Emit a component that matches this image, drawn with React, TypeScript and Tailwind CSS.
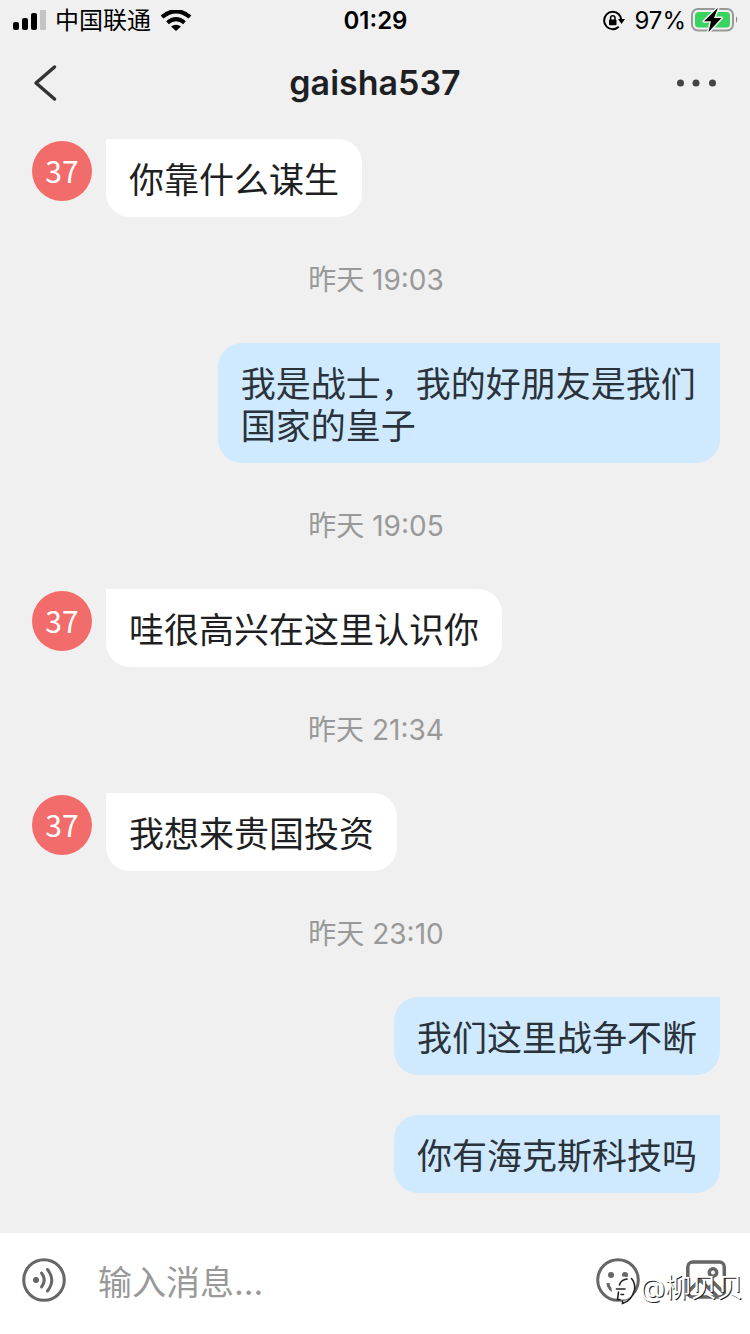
import React from "react";

type Item =
  | { kind: "time"; text: string }
  | { kind: "in" | "out"; text: string };

const items: Item[] = [
  { kind: "in", text: "你靠什么谋生" },
  { kind: "time", text: "昨天 19:03" },
  { kind: "out", text: "我是战士，我的好朋友是我们国家的皇子" },
  { kind: "time", text: "昨天 19:05" },
  { kind: "in", text: "哇很高兴在这里认识你" },
  { kind: "time", text: "昨天 21:34" },
  { kind: "in", text: "我想来贵国投资" },
  { kind: "time", text: "昨天 23:10" },
  { kind: "out", text: "我们这里战争不断" },
  { kind: "out", text: "你有海克斯科技吗" },
];

function StatusBar() {
  return (
    <div className="grid h-[42px] grid-cols-[1fr_auto_1fr] items-center pr-3 pl-[13px] text-2xl text-black">
      <div className="flex items-center gap-[9px]">
        <svg width="33" height="22" viewBox="0 0 33 22" aria-hidden="true">
          <rect x="0" y="12" width="6" height="8" rx="2" />
          <rect x="9" y="8" width="6" height="12" rx="2" />
          <rect x="18" y="3" width="6" height="17" rx="2" />
          <rect x="27" y="-1" width="6" height="21" rx="1.5" fill="#c4c4c4" />
        </svg>
        <span className="leading-10">中国联通</span>
        <svg width="32" height="22" viewBox="0 0 32 22" aria-hidden="true">
          <path d="M2 7 Q16 -4.500 30 7" fill="none" stroke="#000" strokeWidth="4.200" />
          <path d="M7.500 12.700 Q16 5.500 24.500 12.700" fill="none" stroke="#000" strokeWidth="4" />
          <path d="M16 21 L11 16.500 Q16 13 21 16.500 Z" />
        </svg>
      </div>
      <span className="font-semibold">01:29</span>
      <div className="flex items-center justify-end gap-1">
        <div className="flex items-center gap-[9px]">
          <svg width="22" height="22" viewBox="0 0 22 22" aria-hidden="true">
            <path d="M15.800 4.200 A8.700 8.700 0 1 0 15.800 16.800" fill="none" stroke="#000" strokeWidth="2" />
            <path d="M15.500 4 Q18.300 6.500 18.300 10" fill="none" stroke="#000" strokeWidth="2" />
            <path d="M15 9 H22 L18.500 14 Z" />
            <rect x="6" y="9.500" width="7.500" height="5.800" rx="1" />
            <path d="M7.600 10 V8 a2.200 2.200 0 0 1 4.400 0 V10" fill="none" stroke="#000" strokeWidth="1.500" />
          </svg>
          <span>97%</span>
        </div>
        <svg width="48" height="28" viewBox="0 0 48 28" aria-hidden="true">
          <rect x="2" y="2" width="41" height="21.500" rx="6" fill="none" stroke="#999" strokeWidth="2" />
          <rect x="5" y="5" width="35" height="15.500" rx="3.500" fill="#3bd35f" />
          <path d="M46 9 q2.500 3.500 0 7 z" fill="#888" />
          <path d="M28 .8 L14 14.300 H21 L18.500 25 L31.500 11 H24 Z" fill="#000" stroke="#f0f0f0" strokeWidth="3" strokeLinejoin="round" paintOrder="stroke" />
        </svg>
      </div>
    </div>
  );
}

function NavBar() {
  return (
    <header className="grid h-[81px] grid-cols-[1fr_auto_1fr] items-center px-8">
      <button type="button" aria-label="返回" className="justify-self-start">
        <svg width="26" height="38" viewBox="0 0 26 38" fill="none" stroke="#333" strokeWidth="3.500" strokeLinecap="round" strokeLinejoin="round">
          <path d="M22.500 3 L4 19 L22.500 35" />
        </svg>
      </button>
      <h1 className="text-[34px] font-semibold text-[#1d1f23]">gaisha537</h1>
      <button type="button" aria-label="更多" className="justify-self-end">
        <svg width="42" height="20" viewBox="0 0 42 20" fill="#444">
          <circle cx="4.500" cy="10" r="3.500" />
          <circle cx="20" cy="10" r="3.500" />
          <circle cx="36.500" cy="10" r="3.500" />
        </svg>
      </button>
    </header>
  );
}

function Row({ item }: { item: Item }) {
  if (item.kind === "time") {
    return (
      <li className="text-center text-[28px] leading-[46px] text-[#999]">
        <time>{item.text}</time>
      </li>
    );
  }
  if (item.kind === "out") {
    return (
      <li className="flex justify-end">
        <p className="max-w-[73%] rounded-3xl rounded-tr-none bg-[#cfe9fe] px-[23px] pt-5 pb-4 text-[35px] leading-[42px] text-[#2a323a]">
          {item.text}
        </p>
      </li>
    );
  }
  return (
    <li className="flex items-start gap-[14px]">
      <span className="mt-[2px] size-[60px] shrink-0 rounded-full bg-[#f16c6b] text-center font-['Noto_Sans_CJK_SC',sans-serif] text-[30px] leading-[58px] text-white">
        37
      </span>
      <p className="max-w-[73%] rounded-3xl rounded-tl-none bg-white px-[23px] pt-5 pb-4 text-[35px] leading-[42px] text-[#1d1f23]">
        {item.text}
      </p>
    </li>
  );
}

function Watermark() {
  return (
    <div className="pointer-events-none absolute right-[7px] bottom-[26px] flex items-center gap-1 text-[26px] leading-10 text-white [text-shadow:1px_1px_0_#222]">
      <svg width="27" height="34" viewBox="0 0 27 34" fill="none" aria-hidden="true">
        <ellipse cx="14" cy="17" rx="11.500" ry="11.500" fill="#fff" />
        <g stroke="#222" strokeWidth="1.600" strokeLinecap="round">
          <path d="M18 8 Q11.500 9 10.500 14" />
          <path d="M7.500 18 H16" />
          <path d="M9.500 21 L8.500 28.500 H11" />
          <path d="M12 23.500 H14.500" />
          <path d="M22.500 7.500 Q26.500 12 25.500 19 Q22.500 30 13.500 32.500 V30.500" />
        </g>
      </svg>
      <span>@柳贝贝</span>
    </div>
  );
}

function Composer() {
  return (
    <form className="relative flex items-center bg-white px-[22px] pt-[25px] pb-8" onSubmit={(e) => e.preventDefault()}>
      <button type="button" aria-label="语音" className="shrink-0">
        <svg width="44" height="44" viewBox="0 0 44 44" fill="none" stroke="#666" strokeWidth="3" strokeLinecap="round">
          <circle cx="22" cy="22" r="20.300" />
          <circle cx="14" cy="22" r="3" fill="#666" stroke="none" />
          <path d="M19.500 15 Q25 22 19.500 29" />
          <path d="M25.500 11.500 Q34 22 25.500 33" />
        </svg>
      </button>
      <input
        type="text"
        aria-label="输入消息"
        placeholder="输入消息..."
        className="ml-8 h-11 min-w-0 flex-1 bg-transparent pt-1 text-[34px] text-[#1d1f23] outline-none placeholder:text-[#999]"
      />
      <div className="flex shrink-0 gap-11">
        <button type="button" aria-label="表情">
          <svg width="44" height="44" viewBox="0 0 44 44" fill="none" stroke="#666" strokeWidth="3">
            <circle cx="22" cy="22" r="20.300" />
            <circle cx="15" cy="17" r="3" fill="#666" stroke="none" />
            <circle cx="29" cy="17" r="3" fill="#666" stroke="none" />
            <path d="M12 25 a10 9 0 0 0 20 0" />
          </svg>
        </button>
        <button type="button" aria-label="图片">
          <svg width="44" height="44" viewBox="0 0 44 44" fill="none" stroke="#666" strokeWidth="3.500">
            <rect x="3.800" y="4" width="36.500" height="35" rx="5" />
            <circle cx="29" cy="14.500" r="3.700" />
            <path d="M4 34 L16 22 L33 38 M25 30 L30 25 L39 34" />
          </svg>
        </button>
      </div>
      <Watermark />
    </form>
  );
}

export default function App() {
  return (
    <div className="flex min-h-screen flex-col bg-[#f0f0f0] font-['Inter','Noto_Sans_CJK_SC',sans-serif]">
      <StatusBar />
      <NavBar />
      <main className="flex-1 pt-4 pr-[30px] pb-10 pl-8">
        <ul className="flex flex-col gap-10">
          {items.map((item, i) => (
            <Row key={i} item={item} />
          ))}
        </ul>
      </main>
      <Composer />
    </div>
  );
}
